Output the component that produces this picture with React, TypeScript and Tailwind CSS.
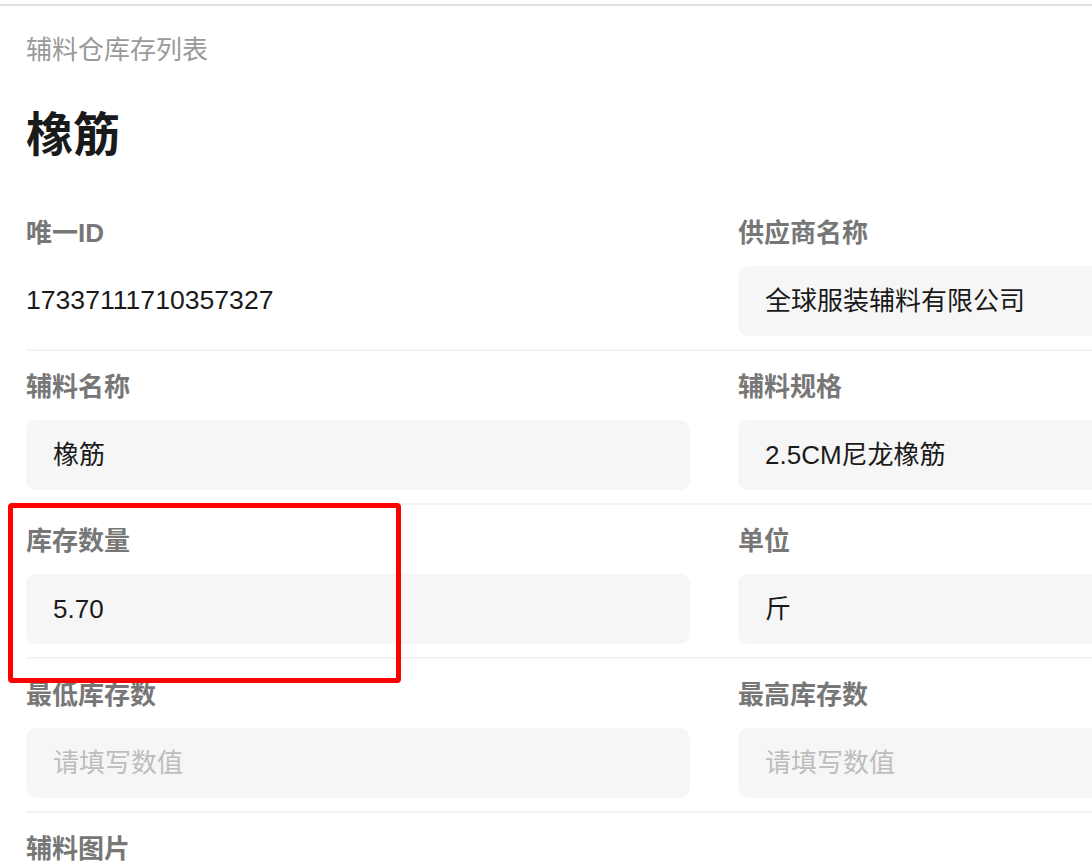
import React from 'react';

type Field = {
  label: string;
  value?: string;
  placeholder?: string;
  plain?: boolean;
};

const rows: Field[][] = [
  [
    { label: '唯一ID', value: '17337111710357327', plain: true },
    { label: '供应商名称', value: '全球服装辅料有限公司' },
  ],
  [
    { label: '辅料名称', value: '橡筋' },
    { label: '辅料规格', value: '2.5CM尼龙橡筋' },
  ],
  [
    { label: '库存数量', value: '5.70' },
    { label: '单位', value: '斤' },
  ],
  [
    { label: '最低库存数', placeholder: '请填写数值' },
    { label: '最高库存数', placeholder: '请填写数值' },
  ],
];

const font = { fontFamily: '"Liberation Sans", "Noto Sans CJK SC", sans-serif' };

const FieldCell = ({ field }: { field: Field }) => (
  <div className="flex flex-col">
    <div className="h-[32px] text-[26px] leading-[32px] font-bold text-[#777]">{field.label}</div>
    {field.plain ? (
      <div className="mt-[17px] h-[70px] flex items-center text-[26.6px] text-[#1a1a1a]">{field.value}</div>
    ) : (
      <div className="mt-[17px] h-[70px] flex items-center rounded-[10px] bg-[#f6f6f6] px-[27px] text-[26px]">
        {field.value ? (
          <span className="text-[#1a1a1a]">{field.value}</span>
        ) : (
          <span className="text-[#bdbdbd]">{field.placeholder}</span>
        )}
      </div>
    )}
  </div>
);

export default function App() {
  return (
    <div className="relative w-[1092px] h-[866px] overflow-hidden bg-white" style={font}>
      <div className="h-[4px]" />
      <div className="h-[2px] bg-[#e0e0e0]" />
      <div className="w-[1402px] pl-[26px]">
        <div className="mt-[26px] h-[36px] text-[26px] leading-[36px] text-[#9a9a9a]">辅料仓库存列表</div>
        <h1 className="mt-[37px] h-[60px] text-[47px] leading-[60px] font-bold text-[#1a1a1a]">橡筋</h1>
        <div className="mt-[32px]">
          {rows.map((row, i) => (
            <div key={i} className="grid grid-cols-[664px_664px] gap-x-[48px] pt-[20px] pb-[13px] border-b-2 border-[#f2f2f2]">
              {row.map((f) => (
                <FieldCell key={f.label} field={f} />
              ))}
            </div>
          ))}
          <div className="pt-[20px]">
            <div className="h-[32px] text-[26px] leading-[32px] font-bold text-[#777]">辅料图片</div>
            <div className="mt-[17px] h-[140px] w-[140px] rounded-[10px] bg-[#f6f6f6]" />
          </div>
        </div>
      </div>
      <div className="absolute left-[8px] top-[503px] w-[393px] h-[180px] border-[5px] border-[#ff0000] rounded-[4px]" />
    </div>
  );
}
